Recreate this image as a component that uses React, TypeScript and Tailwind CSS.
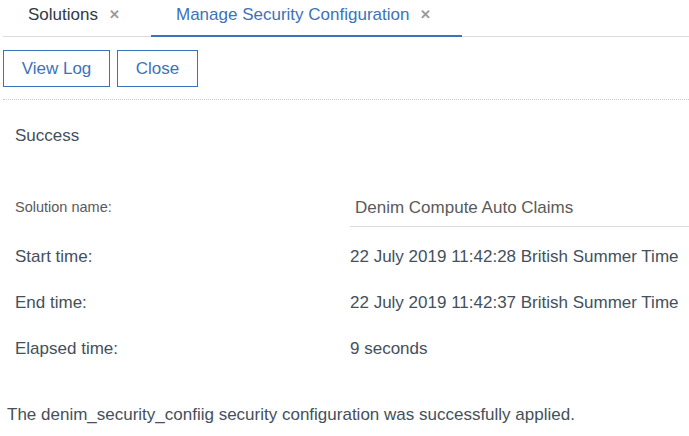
export default function App() {
  return (
    <div className="w-[689px] h-[436px] bg-white overflow-hidden text-[#44505c]" style={{ fontFamily: '"Liberation Sans", Arial, sans-serif' }}>
      <div className="ml-[3px] flex h-[37px] border-b border-[#dcdcdc]">
        <div className="flex w-[148px] items-center pl-[25px] gap-[11px] pb-[7px] text-[17px] text-[#2f3a45]">
          <span>Solutions</span>
          <span className="text-[#9a9a9a] text-[13px] font-bold">✕</span>
        </div>
        <div className="flex w-[311px] items-center pl-[25px] gap-[11px] pb-[5px] -mb-px border-b-2 border-[#3b73b9] text-[17px] text-[#3b73b9]">
          <span>Manage Security Configuration</span>
          <span className="text-[#9a9a9a] text-[13px] font-bold">✕</span>
        </div>
      </div>
      <div className="ml-[3px] mt-[13px] flex gap-[7px]">
        <button className="h-[37px] w-[107px] border border-[#3b73b9] text-[#3b73b9] text-[17px]">View Log</button>
        <button className="h-[37px] w-[81px] border border-[#3b73b9] text-[#3b73b9] text-[17px]">Close</button>
      </div>
      <div className="ml-[3px] mt-[12px] border-t border-dotted border-[#c8c8c8]" />
      <div className="pl-[15px]">
        <div className="mt-[24px] h-[24px] leading-[24px] text-[17px]">Success</div>
        <div className="mt-[41px] grid grid-cols-[335px_1fr] items-center">
          <div className="text-[14.5px] text-[#5a5a5a]">Solution name:</div>
          <div className="h-[38px] border-b border-[#dcdcdc] flex items-center pl-[5px] text-[17px] text-[#5a5a5a]">Denim Compute Auto Claims</div>
        </div>
        <div className="mt-[18px] grid grid-cols-[335px_1fr] text-[17px] leading-[24px]">
          <div>Start time:</div>
          <div>22 July 2019 11:42:28 British Summer Time</div>
        </div>
        <div className="mt-[22px] grid grid-cols-[335px_1fr] text-[17px] leading-[24px]">
          <div>End time:</div>
          <div>22 July 2019 11:42:37 British Summer Time</div>
        </div>
        <div className="mt-[22px] grid grid-cols-[335px_1fr] text-[17px] leading-[24px]">
          <div>Elapsed time:</div>
          <div>9 seconds</div>
        </div>
      </div>
      <div className="ml-[7px] mt-[42px] text-[17px] leading-[24px]">The denim_security_confiig security configuration was successfully applied.</div>
    </div>
  );
}
